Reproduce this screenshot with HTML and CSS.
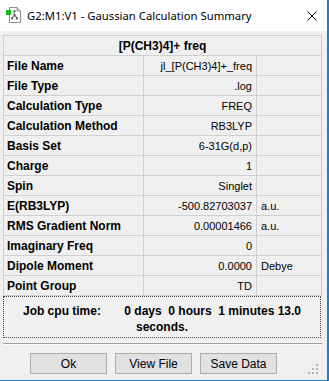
FILE: index.html
```html
<!DOCTYPE html>
<html lang="en">
<head>
<meta charset="UTF-8">
<meta name="viewport" content="width=device-width, initial-scale=1.0">
<title>Gaussian Calculation Summary</title>
<link rel="stylesheet" href="styles.css">
</head>
<body>

<div class="window">
    <div class="titlebar">
        <svg class="app-icon" width="16" height="16" viewBox="0 0 16 16">
            <path d="M4.5 0.5 H12 L15.5 4 V15.5 H4.5 Z" fill="#fff" stroke="#8a8a8a"/>
            <path d="M12 0.5 V4 H15.5" fill="none" stroke="#8a8a8a"/>
            <path d="M9.5 4 V8 M9.5 8 L7 11 M9.5 8 L12 11 M7 11 V13 M12 11 V13" stroke="#8c8c8c" stroke-width="1.2" fill="none"/>
            <rect x="8.5" y="3" width="2" height="2" fill="#6e6e6e"/>
            <rect x="8.5" y="7" width="2" height="2" fill="#6e6e6e"/>
            <rect x="6" y="10" width="2" height="2" fill="#6e6e6e"/>
            <rect x="11" y="10" width="2" height="2" fill="#6e6e6e"/>
            <rect x="1" y="3" width="5" height="5" fill="#12c012"/>
        </svg>
        <span class="title">G2:M1:V1 - Gaussian Calculation Summary</span>
        <svg class="close" width="10" height="10" viewBox="0 0 10 10">
            <path d="M0.5 0.5 L9.5 9.5 M9.5 0.5 L0.5 9.5" stroke="#000" stroke-width="1"/>
        </svg>
    </div>

    <div class="content">
        <table class="summary">
            <colgroup>
                <col class="c-label">
                <col class="c-value">
                <col class="c-unit">
            </colgroup>
            <tr><th colspan="3">[P(CH3)4]+ freq</th></tr>
            <tr><td class="label">File Name</td><td class="value">jl_[P(CH3)4]+_freq</td><td class="unit"></td></tr>
            <tr><td class="label">File Type</td><td class="value">.log</td><td class="unit"></td></tr>
            <tr><td class="label">Calculation Type</td><td class="value">FREQ</td><td class="unit"></td></tr>
            <tr><td class="label">Calculation Method</td><td class="value">RB3LYP</td><td class="unit"></td></tr>
            <tr><td class="label">Basis Set</td><td class="value">6-31G(d,p)</td><td class="unit"></td></tr>
            <tr><td class="label">Charge</td><td class="value">1</td><td class="unit"></td></tr>
            <tr><td class="label">Spin</td><td class="value">Singlet</td><td class="unit"></td></tr>
            <tr><td class="label">E(RB3LYP)</td><td class="value">-500.82703037</td><td class="unit">a.u.</td></tr>
            <tr><td class="label">RMS Gradient Norm</td><td class="value">0.00001466</td><td class="unit">a.u.</td></tr>
            <tr><td class="label">Imaginary Freq</td><td class="value">0</td><td class="unit"></td></tr>
            <tr><td class="label">Dipole Moment</td><td class="value">0.0000</td><td class="unit">Debye</td></tr>
            <tr><td class="label">Point Group</td><td class="value">TD</td><td class="unit"></td></tr>
        </table>

        <div class="cputime">Job cpu time:       0 days  0 hours  1 minutes 13.0 seconds.</div>

        <div class="separator"></div>

        <div class="buttons">
            <button type="button">Ok</button>
            <button type="button">View File</button>
            <button type="button">Save Data</button>
        </div>

        <svg class="grip" width="10" height="10" viewBox="0 0 10 10">
            <rect x="8" y="0" width="2" height="2" fill="#b4b4b4"/>
            <rect x="4" y="4" width="2" height="2" fill="#b4b4b4"/>
            <rect x="8" y="4" width="2" height="2" fill="#b4b4b4"/>
            <rect x="0" y="8" width="2" height="2" fill="#b4b4b4"/>
            <rect x="4" y="8" width="2" height="2" fill="#b4b4b4"/>
            <rect x="8" y="8" width="2" height="2" fill="#b4b4b4"/>
        </svg>
    </div>
</div>

</body>
</html>
```

FILE: styles.css
```css
body {
    margin: 0;
    background: #f0f0f0;
    font-family: "Liberation Sans", Arial, sans-serif;
}

.window {
    width: 327px;
    height: 380px;
    background: #f0f0f0;
    border-right: 2px solid #1c7fd6;
    border-bottom: 1px solid #1c7fd6;
    position: relative;
    overflow: hidden;
}

.titlebar {
    height: 31px;
    background: #fff;
    display: flex;
    align-items: center;
}

.app-icon {
    margin-left: 5px;
    margin-top: -2px;
}

.title {
    margin-left: 6px;
    font-family: "Noto Sans", "Open Sans", sans-serif;
    font-size: 11.3px;
    color: #000;
    flex: 1;
}

.close {
    margin-right: 10px;
}

.content {
    padding: 4px 0 0 3px;
}

.summary {
    border-collapse: collapse;
    table-layout: fixed;
    width: 319px;
    border: 1px solid #a0a0a0;
    font-size: 12px;
}

.c-label { width: 140px; }
.c-value { width: 113px; }
.c-unit { width: 65px; }

.summary th,
.summary td {
    height: 19px;
    padding: 0;
    border: 1px solid #cfcfcf;
    white-space: nowrap;
    overflow: hidden;
}

.summary th {
    font-weight: bold;
    text-align: center;
}

.summary .label {
    font-weight: bold;
    padding-left: 3px;
}

.summary .value {
    font-size: 11px;
    text-align: right;
    padding-right: 4px;
}

.summary .unit {
    font-size: 11px;
    padding-left: 4px;
}

.cputime {
    width: 316px;
    border: 1px dotted #444;
    font-size: 12px;
    font-weight: bold;
    text-align: center;
    white-space: pre-wrap;
    line-height: 16px;
    padding-top: 6px;
    height: 34px;
}

.separator {
    width: 319px;
    margin-top: 5px;
    border-top: 1px solid #a0a0a0;
    border-bottom: 1px solid #fff;
}

.buttons {
    display: flex;
    gap: 8px;
    margin: 8px 0 0 27px;
}

.buttons button {
    width: 77px;
    height: 21px;
    background: #e1e1e1;
    border: 1px solid #adadad;
    font-family: "Liberation Sans", Arial, sans-serif;
    font-size: 12px;
    color: #000;
    padding: 0;
}

.grip {
    position: absolute;
    right: 9px;
    bottom: 6px;
}
```
